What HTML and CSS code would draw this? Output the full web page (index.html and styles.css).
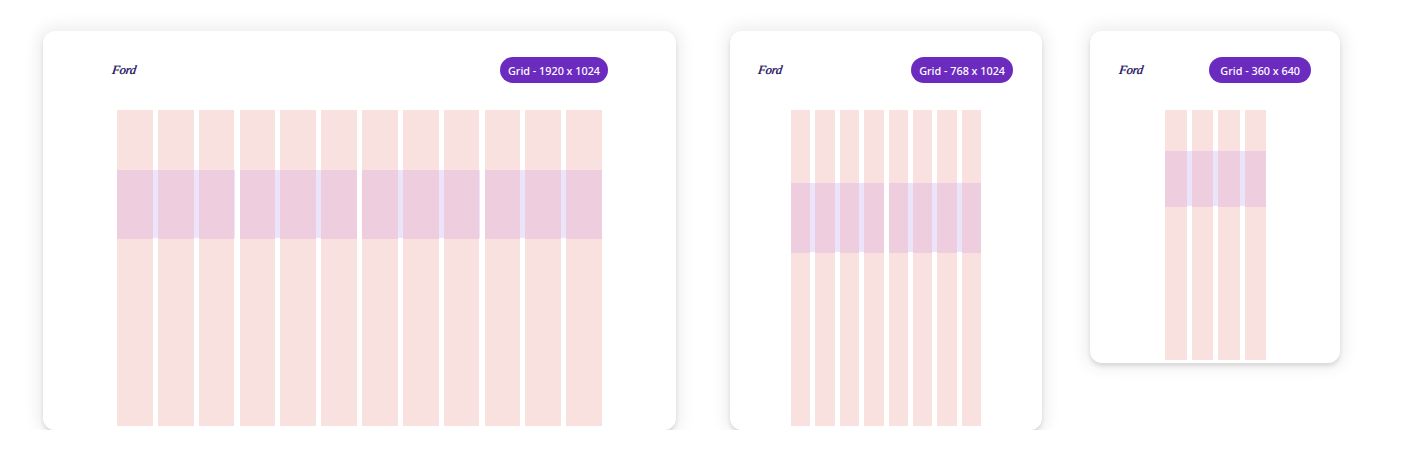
FILE: index.html
```html
<!DOCTYPE html>
<html lang="en">
<head>
<meta charset="utf-8">
<title>Grid layouts</title>
<link rel="stylesheet" href="styles.css">
</head>
<body>
<main class="board">
  <section class="card card-desktop">
    <header class="card-head">
      <span class="logo">Ford</span>
      <span class="badge">Grid - 1920 x 1024</span>
    </header>
    <div class="grid">
      <div class="group"><i class="col"></i><i class="col"></i><i class="col"></i></div>
      <div class="group"><i class="col"></i><i class="col"></i><i class="col"></i></div>
      <div class="group"><i class="col"></i><i class="col"></i><i class="col"></i></div>
      <div class="group"><i class="col"></i><i class="col"></i><i class="col"></i></div>
    </div>
  </section>
  <section class="card card-tablet">
    <header class="card-head">
      <span class="logo">Ford</span>
      <span class="badge">Grid - 768 x 1024</span>
    </header>
    <div class="grid">
      <div class="group"><i class="col"></i><i class="col"></i><i class="col"></i><i class="col"></i></div>
      <div class="group"><i class="col"></i><i class="col"></i><i class="col"></i><i class="col"></i></div>
    </div>
  </section>
  <section class="card card-mobile">
    <header class="card-head">
      <span class="logo">Ford</span>
      <span class="badge badge-wide">Grid - 360 x 640</span>
    </header>
    <div class="grid">
      <div class="group"><i class="col"></i><i class="col"></i><i class="col"></i><i class="col"></i></div>
    </div>
  </section>
</main>
</body>
</html>
```

FILE: styles.css
```css
html, body {
  margin: 0;
  padding: 0;
  background: #ffffff;
}

.board {
  display: flex;
  align-items: flex-start;
  padding: 31px 0 0 43px;
}

.card {
  box-sizing: border-box;
  display: flex;
  flex-direction: column;
  background: #ffffff;
  border-radius: 12px;
  box-shadow: 0 3px 4px rgba(0, 0, 0, 0.11), 0 0 16px 5px rgba(0, 0, 0, 0.07);
  padding-top: 26px;
  --band-top: 60px;
  --band-h: 68px;
}

.card-desktop {
  width: 633px;
  height: 399px;
  --hl: 69px;
  --hr: 68px;
  --gl: 74px;
  --gw: 485px;
  --gb: 4px;
}

.card-tablet {
  width: 312px;
  height: 399px;
  margin-left: 54px;
  --hl: 28px;
  --hr: 29px;
  --gl: 61px;
  --gw: 190px;
  --gb: 4px;
  --band-top: 73px;
  --band-h: 69px;
}

.card-mobile {
  width: 250px;
  height: 332px;
  margin-left: 48px;
  --hl: 29px;
  --hr: 29px;
  --gl: 75px;
  --gw: 101px;
  --gb: 3px;
  --band-top: 41px;
  --band-h: 55px;
}

.card-head {
  display: flex;
  align-items: center;
  justify-content: space-between;
  height: 26px;
  padding: 0 var(--hr) 0 var(--hl);
}

.logo {
  font-family: "Liberation Serif", "DejaVu Serif", serif;
  font-style: italic;
  font-size: 12.5px;
  letter-spacing: -0.2px;
  color: #221a4a;
  text-shadow: 0.5px 0 0 #5a3fb0;
  line-height: 1;
  transform: skewX(-8deg);
}

.badge {
  display: flex;
  align-items: center;
  height: 26px;
  padding: 0 8px;
  border-radius: 13px;
  background: #6c2bbf;
  color: #ffffff;
  font-family: "Noto Sans", "Open Sans", sans-serif;
  font-size: 10.8px;
  font-weight: 500;
  white-space: nowrap;
}

.badge-wide {
  padding: 0 11px;
}

.grid {
  flex: 1;
  display: flex;
  gap: 5px;
  width: var(--gw);
  margin: 27px 0 var(--gb) var(--gl);
}

.group {
  flex: 1;
  display: flex;
  gap: 5px;
  background: linear-gradient(to bottom,
    transparent 0,
    transparent var(--band-top),
    #ece4fb var(--band-top),
    #ece4fb calc(var(--band-top) + var(--band-h)),
    transparent calc(var(--band-top) + var(--band-h)));
}

.col {
  flex: 1;
  display: block;
  background: linear-gradient(to bottom,
    #f9e1e0 0,
    #f9e1e0 var(--band-top),
    #eecddf var(--band-top),
    #eecddf calc(var(--band-top) + var(--band-h) + 1px),
    #f9e1e0 calc(var(--band-top) + var(--band-h) + 1px));
}
```
